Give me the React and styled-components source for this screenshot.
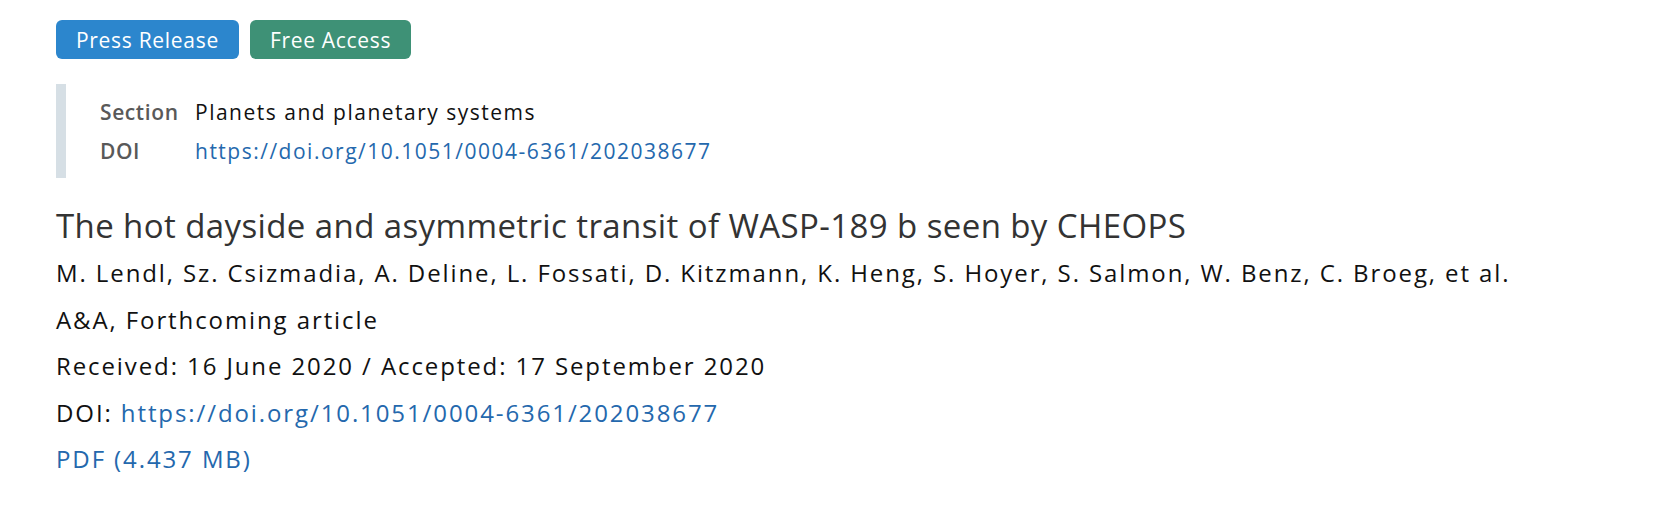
import React from 'react';
import styled, { createGlobalStyle } from 'styled-components';

const GlobalStyle = createGlobalStyle`
  body {
    margin: 0;
    background: #fff;
    font-family: "Open Sans", "Noto Sans", sans-serif;
  }
`;

const Page = styled.div`
  padding: 20px 56px 0 56px;
`;

const Tags = styled.div`
  display: flex;
  gap: 11px;
`;

const Tag = styled.a`
  display: inline-flex;
  align-items: center;
  height: 39px;
  padding: 0 20px;
  border-radius: 6px;
  background: ${(p) => p.$bg};
  color: #fff;
  font-size: 21px;
  letter-spacing: 0.7px;
  text-decoration: none;
`;

const Meta = styled.div`
  margin-top: 25px;
  border-left: 10px solid #d6dfe5;
  padding: 8px 0 8px 34px;
  display: grid;
  grid-template-columns: 95px auto;
  grid-auto-rows: 39px;
  align-items: center;
  font-size: 21px;
  letter-spacing: 1.5px;
`;

const Label = styled.span`
  color: #595959;
  font-weight: 600;
  letter-spacing: 0.6px;
`;

const Value = styled.span`
  color: #111;
`;

const Link = styled.a`
  color: #2468ad;
  text-decoration: none;
`;

const Title = styled.h2`
  margin: 24px 0 0;
  font-size: 33px;
  font-weight: 400;
  line-height: 48px;
  letter-spacing: 0.4px;
  color: #333;
`;

const Line = styled.p`
  margin: 0;
  font-size: 24px;
  line-height: 46.5px;
  letter-spacing: 1.9px;
  color: #111;
`;

export default function App() {
  return (
    <Page>
      <GlobalStyle />
      <Tags>
        <Tag href="#" $bg="#2c86cd">Press Release</Tag>
        <Tag href="#" $bg="#3e9176">Free Access</Tag>
      </Tags>
      <Meta>
        <Label>Section</Label>
        <Value>Planets and planetary systems</Value>
        <Label>DOI</Label>
        <Link href="#">https://doi.org/10.1051/0004-6361/202038677</Link>
      </Meta>
      <Title>The hot dayside and asymmetric transit of WASP-189 b seen by CHEOPS</Title>
      <Line>M. Lendl, Sz. Csizmadia, A. Deline, L. Fossati, D. Kitzmann, K. Heng, S. Hoyer, S. Salmon, W. Benz, C. Broeg, et al.</Line>
      <Line>A&amp;A, Forthcoming article</Line>
      <Line>Received: 16 June 2020 / Accepted: 17 September 2020</Line>
      <Line>DOI: <Link href="#">https://doi.org/10.1051/0004-6361/202038677</Link></Line>
      <Line><Link href="#">PDF (4.437 MB)</Link></Line>
    </Page>
  );
}
